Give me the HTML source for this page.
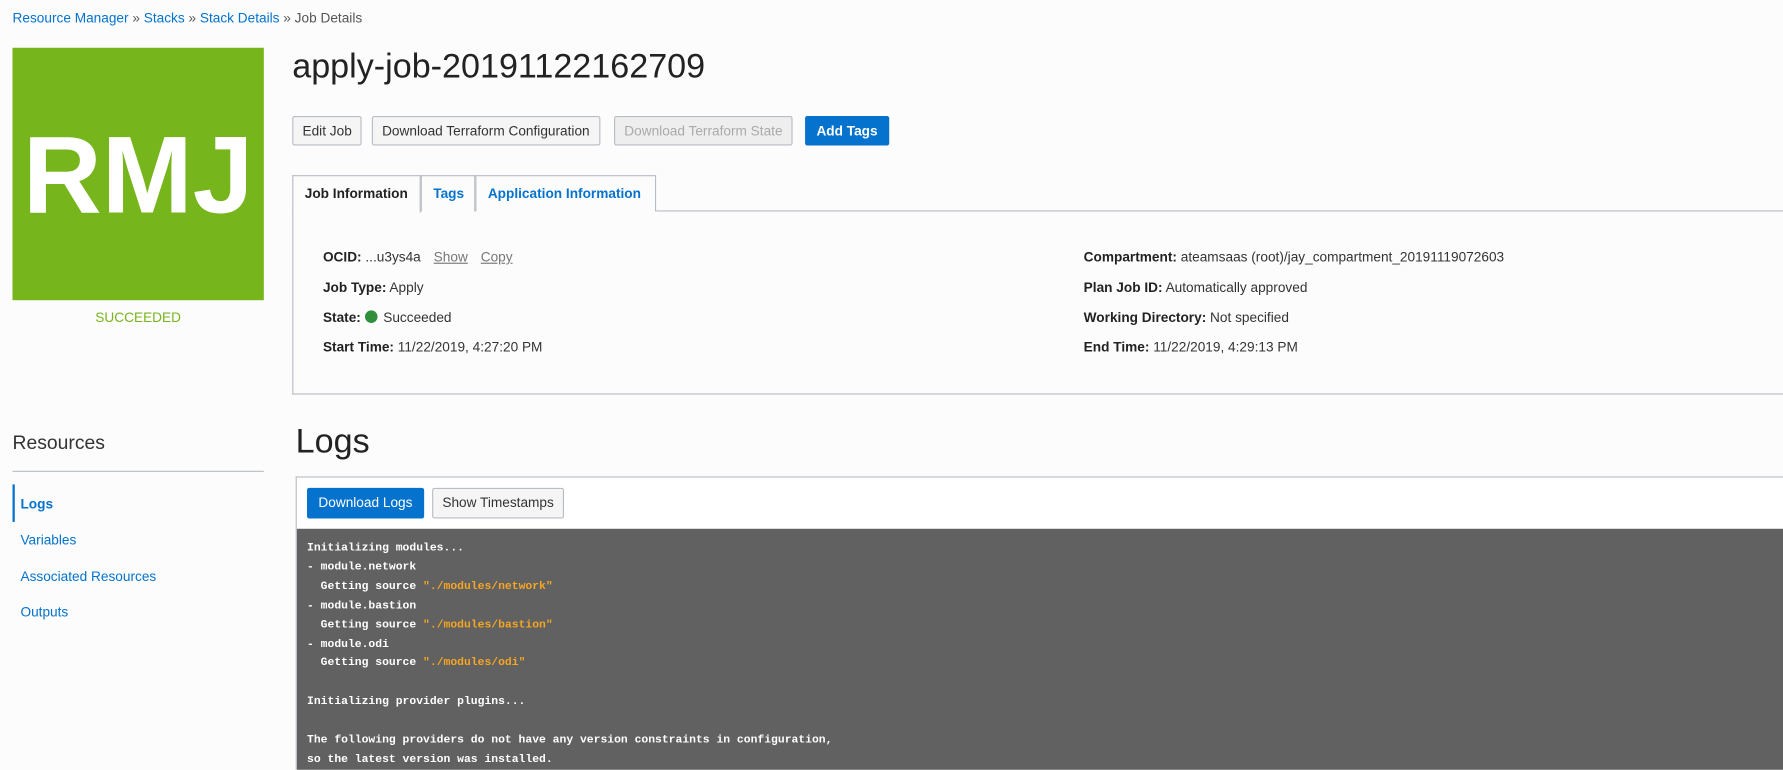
<!DOCTYPE html>
<html><head><meta charset="utf-8"><style>
*{box-sizing:border-box}
html,body{margin:0;width:1783px;height:770px;overflow:hidden;background:#fcfcfc}
#w{position:absolute;left:0;top:0;width:1568px;height:677px;overflow:hidden;transform:scale(1.13712);transform-origin:0 0;font-family:"Liberation Sans",Arial,sans-serif;font-size:12px;color:#333}
a{color:#0572ce;text-decoration:none}
.abs{position:absolute}
.bc{left:11px;top:9px;font-size:12px;color:#555}
.logo{left:11px;top:42px;width:221px;height:222px;background:#76b51b;color:#fff;font-weight:bold;font-size:96px;text-align:center;line-height:226px;letter-spacing:0}
.st{left:11px;top:272px;width:221px;text-align:center;color:#76b51b;font-size:12px}
h1{position:absolute;left:257px;top:42px;margin:0;font-weight:normal;font-size:30px;color:#222}
.btn{position:absolute;top:102px;height:26px;border:1px solid #b8bcc4;border-radius:2px;background:#f5f5f5;font-size:12px;line-height:24px;padding:0 8px;color:#333}
.tab{position:absolute;top:154px;height:32px;border:1px solid #b8bcc4;border-bottom:none;background:#fcfcfc;line-height:31px;padding:0 10px;font-weight:bold;font-size:12px;color:#0572ce}
.panel{position:absolute;left:257px;top:185px;width:1311px;height:162px;border:1px solid #b8bcc4;border-right:none;background:#fcfcfc}
.row{position:absolute;font-size:12px;color:#333}
.row b{color:#222}
.u{color:#777;text-decoration:underline;margin-left:8px}
.dot{display:inline-block;width:11px;height:11px;border-radius:50%;background:#2f8f3a;vertical-align:-1px;margin-right:2px}
.res{left:11px;top:380px;font-size:17px;color:#333}
.hr{left:11px;top:414px;width:221px;height:1px;background:#b8bcc4}
.nav{left:18px;font-size:12px;color:#0572ce}
.logs{left:260px;top:372px;font-size:30px;color:#222}
.lp{left:260px;top:419px;width:1308px;height:258px;border:1px solid #b8bcc4;border-right:none;border-bottom:none;background:#fff;overflow:hidden}
.dark{position:absolute;left:0;top:45px;width:100%;height:213px;background:#616161;padding:10px 9px;font-family:"Liberation Mono","DejaVu Sans Mono",monospace;font-size:10px;font-weight:bold;color:#fff;line-height:16.9px;white-space:pre;overflow:hidden}
.y{color:#f5a623}
</style></head><body><div id="w">
<div class="abs bc"><a>Resource Manager</a> » <a>Stacks</a> » <a>Stack Details</a> » Job Details</div>
<div class="abs logo">RMJ</div>
<div class="abs st">SUCCEEDED</div>
<h1>apply-job-20191122162709</h1>
<div class="btn" style="left:257px">Edit Job</div>
<div class="btn" style="left:327px">Download Terraform Configuration</div>
<div class="btn" style="left:540px;color:#aaa;background:#eee">Download Terraform State</div>
<div class="btn" style="left:708px;background:#0572ce;border-color:#0572ce;color:#fff;font-weight:bold;padding:0 9px">Add Tags</div>
<div class="panel"></div>
<div class="tab" style="left:257px;width:113px;color:#222;height:33px">Job Information</div>
<div class="tab" style="left:370px;width:48px">Tags</div>
<div class="tab" style="left:418px;width:159px">Application Information</div>
<div class="row" style="left:284px;top:219px"><b>OCID:</b> ...u3ys4a <span class="u">Show</span> <span class="u">Copy</span></div>
<div class="row" style="left:284px;top:246px"><b>Job Type:</b> Apply</div>
<div class="row" style="left:284px;top:272px"><b>State:</b> <span class="dot"></span> Succeeded</div>
<div class="row" style="left:284px;top:298px"><b>Start Time:</b> 11/22/2019, 4:27:20 PM</div>
<div class="row" style="left:953px;top:219px"><b>Compartment:</b> ateamsaas (root)/jay_compartment_20191119072603</div>
<div class="row" style="left:953px;top:246px"><b>Plan Job ID:</b> Automatically approved</div>
<div class="row" style="left:953px;top:272px"><b>Working Directory:</b> Not specified</div>
<div class="row" style="left:953px;top:298px"><b>End Time:</b> 11/22/2019, 4:29:13 PM</div>
<div class="abs res">Resources</div>
<div class="abs hr"></div>
<div class="abs" style="left:11px;top:426px;width:2px;height:33px;background:#0572ce"></div>
<div class="abs nav" style="top:436px;font-weight:bold">Logs</div>
<div class="abs nav" style="top:468px">Variables</div>
<div class="abs nav" style="top:500px">Associated Resources</div>
<div class="abs nav" style="top:531px">Outputs</div>
<div class="abs logs">Logs</div>
<div class="abs lp">
<div class="btn" style="left:9px;top:9px;height:27px;background:#0572ce;border-color:#0572ce;color:#fff;padding:0 9px">Download Logs</div>
<div class="btn" style="left:119px;top:9px;height:27px">Show Timestamps</div>
<div class="dark">Initializing modules...
- module.network
  Getting source <span class="y">"./modules/network"</span>
- module.bastion
  Getting source <span class="y">"./modules/bastion"</span>
- module.odi
  Getting source <span class="y">"./modules/odi"</span>

Initializing provider plugins...

The following providers do not have any version constraints in configuration,
so the latest version was installed.
</div></div>
</div></body></html>
